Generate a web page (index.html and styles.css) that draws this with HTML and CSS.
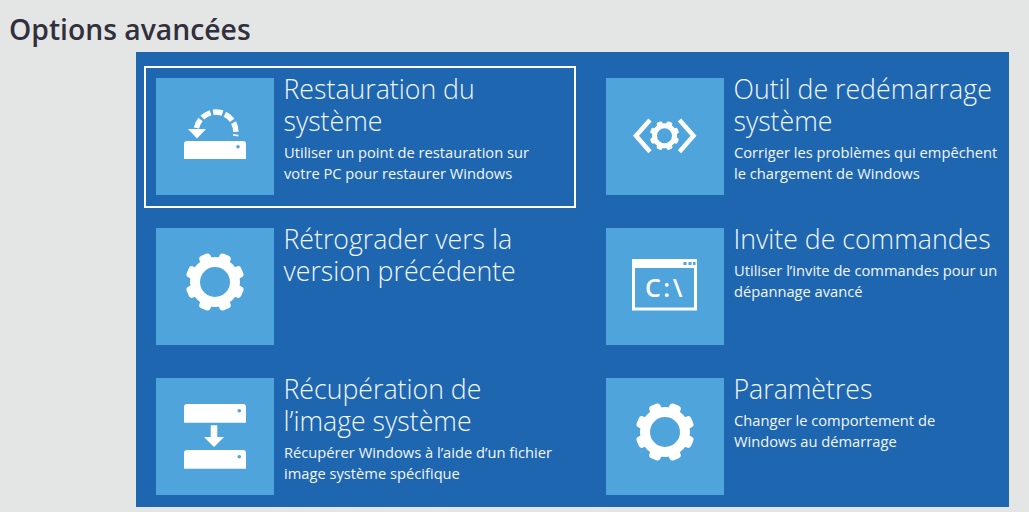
FILE: index.html
```html
<!DOCTYPE html>
<html lang="fr">
<head>
<meta charset="utf-8">
<title>Options avancées</title>
<link rel="stylesheet" href="styles.css">
</head>
<body>
<h1 class="heading">Options avancées</h1>
<main class="panel">
  <svg class="defs" width="0" height="0" aria-hidden="true">
    <defs>
      <g id="gear">
        <circle class="gear-ring" cx="0" cy="0" r="20"/>
        <rect class="gear-tooth" x="-6" y="-29.500" width="12" height="12" rx="3.500" transform="rotate(22.5)"/>
        <rect class="gear-tooth" x="-6" y="-29.500" width="12" height="12" rx="3.500" transform="rotate(67.5)"/>
        <rect class="gear-tooth" x="-6" y="-29.500" width="12" height="12" rx="3.500" transform="rotate(112.5)"/>
        <rect class="gear-tooth" x="-6" y="-29.500" width="12" height="12" rx="3.500" transform="rotate(157.5)"/>
        <rect class="gear-tooth" x="-6" y="-29.500" width="12" height="12" rx="3.500" transform="rotate(202.5)"/>
        <rect class="gear-tooth" x="-6" y="-29.500" width="12" height="12" rx="3.500" transform="rotate(247.5)"/>
        <rect class="gear-tooth" x="-6" y="-29.500" width="12" height="12" rx="3.500" transform="rotate(292.5)"/>
        <rect class="gear-tooth" x="-6" y="-29.500" width="12" height="12" rx="3.500" transform="rotate(337.5)"/>
      </g>
    </defs>
  </svg>

  <div class="grid">
    <article class="option option-selected">
      <div class="tile">
        <svg class="icon" viewBox="0 0 118 117">
          <path class="dashed-arc" d="M40.500 50 A19.800 19.800 0 1 1 79.500 58"/>
          <path class="white" d="M32 51H50L41 60.500Z"/>
          <path class="white" d="M31 63H87a3 3 0 0 1 3 3V81H28V66a3 3 0 0 1 3-3Z"/>
          <circle class="hole" cx="82" cy="68.700" r="1.800"/>
        </svg>
      </div>
      <div class="body">
        <h2 class="title">Restauration du<br>système</h2>
        <p class="desc">Utiliser un point de restauration sur<br>votre PC pour restaurer Windows</p>
      </div>
    </article>

    <article class="option">
      <div class="tile">
        <svg class="icon" viewBox="0 0 118 117">
          <path class="chevron" d="M44 42 30 57.700 44 73.700"/>
          <path class="chevron" d="M73.500 42 87.500 57.700 73.500 73.700"/>
          <use href="#gear" transform="translate(58.500 57.700) scale(0.5)"/>
        </svg>
      </div>
      <div class="body">
        <h2 class="title">Outil de redémarrage<br>système</h2>
        <p class="desc">Corriger les problèmes qui empêchent<br>le chargement de Windows</p>
      </div>
    </article>

    <article class="option">
      <div class="tile">
        <svg class="icon" viewBox="0 0 118 117">
          <use href="#gear" transform="translate(59 54)"/>
        </svg>
      </div>
      <div class="body">
        <h2 class="title">Rétrograder vers la<br>version précédente</h2>
      </div>
    </article>

    <article class="option">
      <div class="tile">
        <svg class="icon" viewBox="0 0 118 117">
          <rect class="window" x="27.500" y="32.500" width="62" height="48.500"/>
          <rect class="white" x="27" y="32" width="63" height="8"/>
          <rect class="hole" x="77.500" y="34" width="3" height="3"/>
          <rect class="hole" x="82.500" y="34" width="3" height="3"/>
          <rect class="hole" x="87" y="34" width="2.500" height="3"/>
          <text class="prompt" x="39" y="69">C:\</text>
        </svg>
      </div>
      <div class="body">
        <h2 class="title">Invite de commandes</h2>
        <p class="desc">Utiliser l’invite de commandes pour un<br>dépannage avancé</p>
      </div>
    </article>

    <article class="option">
      <div class="tile">
        <svg class="icon" viewBox="0 0 118 117">
          <path class="white" d="M31 26H87a3 3 0 0 1 3 3V44.700H28V29a3 3 0 0 1 3-3Z"/>
          <circle class="hole" cx="83.300" cy="32.700" r="1.800"/>
          <path class="white" d="M54.700 47.300H61.300V59H68L58 69 48 59H54.700Z"/>
          <path class="white" d="M31 72H87a3 3 0 0 1 3 3V90.700H28V75a3 3 0 0 1 3-3Z"/>
          <circle class="hole" cx="83.300" cy="78.700" r="1.800"/>
        </svg>
      </div>
      <div class="body">
        <h2 class="title">Récupération de<br>l’image système</h2>
        <p class="desc">Récupérer Windows à l’aide d’un fichier<br>image système spécifique</p>
      </div>
    </article>

    <article class="option">
      <div class="tile">
        <svg class="icon" viewBox="0 0 118 117">
          <use href="#gear" transform="translate(59 54)"/>
        </svg>
      </div>
      <div class="body">
        <h2 class="title">Paramètres</h2>
        <p class="desc">Changer le comportement de<br>Windows au démarrage</p>
      </div>
    </article>
  </div>
</main>
</body>
</html>
```

FILE: styles.css
```css
* {
  box-sizing: border-box;
}

html,
body {
  height: 100%;
}

body {
  margin: 0;
  background: #e4e6e5;
  font-family: "Open Sans", "Liberation Sans", sans-serif;
  overflow: hidden;
}

.heading {
  margin: 0;
  height: 52px;
  padding: 10px 0 0 9px;
  font-family: "Open Sans", "Liberation Sans", sans-serif;
  font-size: 28.300px;
  line-height: 38px;
  font-weight: 600;
  color: #32303c;
}

.panel {
  margin-left: 136px;
  width: 873px;
  height: 455px;
  padding: 14px 0 0 8px;
  background: #1f66b0;
}

.defs {
  display: block;
  position: absolute;
}

.grid {
  display: grid;
  grid-template-columns: 432px 432px;
  grid-auto-rows: 142px;
  column-gap: 18px;
  row-gap: 8px;
}

.option {
  display: flex;
  gap: 10px;
  padding: 10px;
  border: 2px solid transparent;
}

.option-selected {
  border-color: #ffffff;
}

.tile {
  flex: none;
  width: 118px;
  height: 117px;
  background: #4fa4dc;
}

.icon {
  display: block;
  width: 118px;
  height: 117px;
}

.body {
  margin-top: -5px;
  color: #f2f6fb;
}

.title {
  margin: 0 0 0 -0.500px;
  font-size: 26.700px;
  line-height: 32px;
  font-weight: 300;
  white-space: nowrap;
}

.desc {
  margin: 5px 0 0;
  font-size: 14.700px;
  line-height: 21px;
  font-weight: 400;
  white-space: nowrap;
}

.white {
  fill: #ffffff;
}

.hole {
  fill: #4fa4dc;
}

.dashed-arc {
  fill: none;
  stroke: #ffffff;
  stroke-width: 5.500;
  stroke-dasharray: 9.500 2.600;
}

.chevron {
  fill: none;
  stroke: #ffffff;
  stroke-width: 4.500;
}

.gear-ring {
  fill: none;
  stroke: #ffffff;
  stroke-width: 10;
}

.gear-tooth {
  fill: #ffffff;
}

.window {
  fill: none;
  stroke: #ffffff;
  stroke-width: 3;
}

.prompt {
  fill: #ffffff;
  font-family: "Open Sans", "Liberation Sans", sans-serif;
  font-size: 25px;
  font-weight: 600;
  letter-spacing: 2.500px;
}
```
